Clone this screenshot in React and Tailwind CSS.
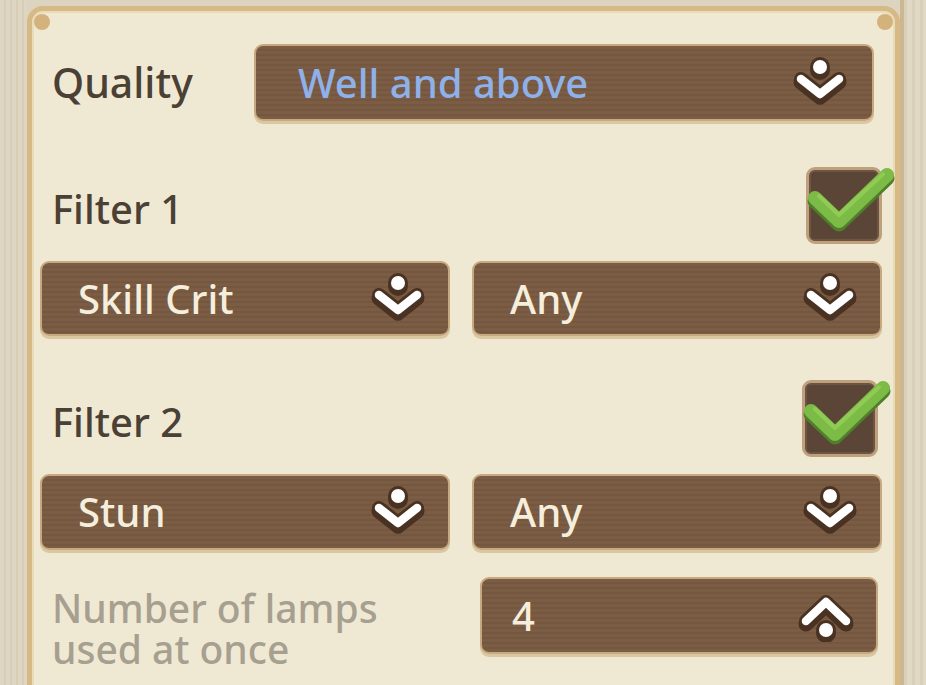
import React from 'react';

const font = { fontFamily: '"Noto Sans", "Open Sans", sans-serif' };

// white caret + dot, drawn twice: dark outline below, white on top
function CaretDot({ up = false }) {
  const caret = up ? '10,31 30,12 50,31' : '11,22 30,37 49,22';
  const dot = up ? { cx: 30, cy: 40 } : { cx: 30, cy: 10 };
  return (
    <svg width="60" height="52" viewBox="0 0 60 52" className="shrink-0">
      <g transform="translate(0 3)">
        <polyline points={caret} fill="none" stroke="#4a3222" strokeWidth="15" strokeLinecap="round" strokeLinejoin="round" />
        <circle {...dot} r="10" fill="#4a3222" />
      </g>
      <polyline points={caret} fill="none" stroke="#4a3222" strokeWidth="14" strokeLinecap="round" strokeLinejoin="round" />
      <circle {...dot} r="10" fill="#4a3222" />
      <polyline points={caret} fill="none" stroke="#ffffff" strokeWidth="8.5" strokeLinecap="round" strokeLinejoin="round" />
      <circle {...dot} r="7" fill="#ffffff" />
    </svg>
  );
}

function Dropdown({ label, className = '', textClass = 'text-[#f6eedc]', up = false, padL = 'pl-[36px]', padR = 'pr-[20px]' }) {
  return (
    <div
      className={`flex items-center justify-between rounded-[9px] border-2 border-[#c8a97f] shadow-[0_3px_0_#dac7a1] bg-[repeating-linear-gradient(180deg,#7b5c44_0px,#7b5c44_3px,#75573f_3px,#75573f_5px)] ${padL} ${padR} ${className}`}
    >
      <span className={`text-[40px] leading-none font-medium ${textClass}`}>{label}</span>
      <CaretDot up={up} />
    </div>
  );
}

function Checkbox() {
  return (
    <div className="relative w-[76px] h-[77px] rounded-[9px] border-[3px] border-[#bfa07d] bg-[#5b4536] shadow-[inset_0_0_0_2px_#6d5443]">
      <svg width="90" height="80" viewBox="0 0 90 80" className="absolute left-0 top-[-3px] overflow-visible">
        <polyline points="6,31 30,54 78,8" fill="none" stroke="#4f7f2b" strokeWidth="15" strokeLinecap="round" strokeLinejoin="round" transform="translate(0 3)" />
        <polyline points="6,31 30,54 78,8" fill="none" stroke="#7cbb45" strokeWidth="14" strokeLinecap="round" strokeLinejoin="round" />
        <polyline points="10,29 30,48 74,7" fill="none" stroke="#8fcb55" strokeWidth="4" strokeLinecap="round" strokeLinejoin="round" />
      </svg>
    </div>
  );
}

export default function App() {
  return (
    <div className="flex w-[926px] h-[685px] overflow-hidden bg-[#ddd4bf]" style={font}>
      {/* left frame strip */}
      <div className="w-[27px] h-full bg-[repeating-linear-gradient(90deg,#ded6c2_0px,#ded6c2_4px,#d6cdb7_4px,#d6cdb7_6px)]" />

      {/* panel */}
      <div className="relative mt-[6px] w-[873px] h-[700px] rounded-t-[16px] border-[5px] border-[#d6b985] bg-[#efe9d4] shadow-[inset_0_0_0_2px_#e9dcb9]">
        <div className="absolute left-[2px] top-[3px] w-[16px] h-[16px] rounded-full bg-[#d3b27c]" />
        <div className="absolute right-[2px] top-[3px] w-[16px] h-[16px] rounded-full bg-[#d3b27c]" />

        <div className="flex flex-col">
          {/* Quality */}
          <div className="flex items-center mt-[33px] h-[77px]">
            <span className="pl-[20px] w-[222px] text-[41px] font-medium text-[#4b4034]">Quality</span>
            <Dropdown label="Well and above" className="w-[620px] h-[77px]" textClass="text-[#8fb1ea]" padL="pl-[42px]" padR="pr-[22px]" />
          </div>

          {/* Filter 1 */}
          <div className="flex items-center justify-between mt-[46px] pl-[20px] pr-[13px]">
            <span className="pt-[6px] text-[40px] font-medium text-[#4b4034]">Filter 1</span>
            <Checkbox />
          </div>
          <div className="flex gap-[22px] mt-[17px] pl-[8px]">
            <Dropdown label="Skill Crit" className="w-[410px] h-[75px]" />
            <Dropdown label="Any" className="w-[410px] h-[75px]" />
          </div>

          {/* Filter 2 */}
          <div className="flex items-center justify-between mt-[44px] pl-[20px] pr-[17px]">
            <span className="pt-[6px] text-[40px] font-medium text-[#4b4034]">Filter 2</span>
            <Checkbox />
          </div>
          <div className="flex gap-[22px] mt-[17px] pl-[8px]">
            <Dropdown label="Stun" className="w-[410px] h-[76px]" />
            <Dropdown label="Any" className="w-[410px] h-[76px]" />
          </div>

          {/* lamps */}
          <div className="flex items-start justify-between mt-[27px] pl-[20px] pr-[17px]">
            <span className="mt-[10px] text-[39px] leading-[41px] font-medium text-[#a79f8f]">
              Number of lamps
              <br />
              used at once
            </span>
            <Dropdown label="4" className="w-[398px] h-[77px]" up padL="pl-[30px]" />
          </div>
        </div>
      </div>

      {/* right frame strip */}
      <div className="w-[26px] h-full border-l-[4px] border-[#cdb691] bg-[repeating-linear-gradient(90deg,#d9d0ba_0px,#d9d0ba_3px,#e1d9c5_3px,#e1d9c5_8px)]" />
    </div>
  );
}
